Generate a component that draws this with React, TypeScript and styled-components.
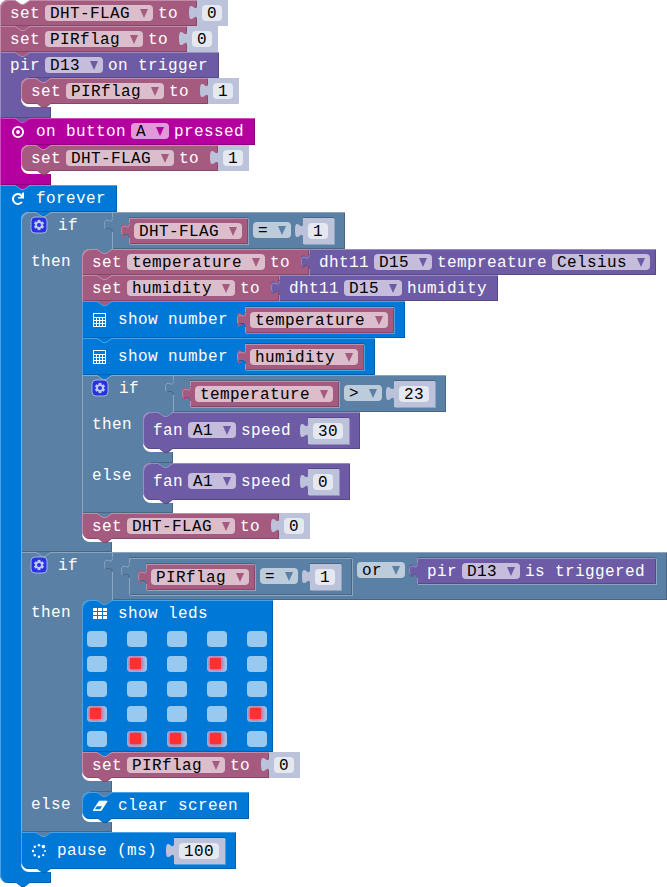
import React from "react";
import styled, { createGlobalStyle, css } from "styled-components";

/* ---------- palette ---------- */

type Tone = { base: string; light: string; dark: string; field: string };

const variable: Tone = { base: "#a55b80", light: "#c08ca6", dark: "#844966", field: "#dbbdcc" };
const sensor: Tone = { base: "#6d5ba5", light: "#998cc0", dark: "#574984", field: "#c5bddb" };
const input: Tone = { base: "#b4009e", light: "#cb4cbb", dark: "#90007e", field: "#e199d8" };
const basic: Tone = { base: "#0078d7", light: "#4ca1e3", dark: "#0060ac", field: "#99c9ef" };
const logic: Tone = { base: "#5b80a5", light: "#8ca6c0", dark: "#496684", field: "#bdccdb" };
const shadow: Tone = { base: "#bdc2db", light: "#bdc2db", dark: "#bdc2db", field: "#e5e7f1" };

const GlobalStyle = createGlobalStyle`
  html, body { margin: 0; background: #fff; }
  body {
    font-family: "Liberation Mono", monospace;
    font-size: 16px;
    letter-spacing: 0.398px;
    overflow: hidden;
  }
  * { box-sizing: border-box; }
`;

/* ---------- block surfaces ---------- */

const bevel = css<{ $tone: Tone }>`
  background: ${(p) => p.$tone.base};
  box-shadow: inset 1px 1px 0 ${(p) => p.$tone.light}, inset -1px -1px 0 ${(p) => p.$tone.dark};
`;

const Workspace = styled.main`
  width: 667px;
  height: 887px;
  overflow: hidden;
  background: #fff;
`;

const Stack = styled.div`
  display: flex;
  flex-direction: column;
  align-items: flex-start;
`;

const Line = styled.div`
  display: flex;
  align-items: flex-start;
`;

const Surface = styled.div<{ $tone: Tone; $h: number; $top?: boolean; $bottom?: boolean; $inline?: boolean }>`
  position: relative;
  display: flex;
  align-items: flex-start;
  gap: 5px;
  flex: none;
  height: ${(p) => p.$h}px;
  padding: ${(p) => (p.$inline ? 10 : 5)}px 11px 0 10px;
  border-radius: ${(p) => (p.$top ? "8px" : "0")} 0 0 ${(p) => (p.$bottom ? "8px" : "0")};
  ${bevel}
`;

const Text = styled.span<{ $after?: number }>`
  height: 16px;
  line-height: 18px;
  white-space: pre;
  color: #fff;
  margin-right: ${(p) => p.$after ?? 0}px;
`;

const IconBox = styled.span<{ $after?: number }>`
  width: 16px;
  height: 16px;
  margin-right: ${(p) => p.$after ?? 5}px;
  flex: none;
  svg { display: block; overflow: visible; }
`;

const Menu = styled.span<{ $tone: Tone }>`
  display: flex;
  height: 16px;
  padding: 0 5px;
  line-height: 18px;
  white-space: pre;
  color: #000;
  background: ${(p) => p.$tone.field};
  border-radius: 4px;
  svg { display: block; width: 8px; height: 16px; margin-left: 10px; }
`;

const Dropdown = ({ tone, children }: { tone: Tone; children: string }) => (
  <Menu $tone={tone}>
    {children}
    <svg viewBox="0 0 8 16"><path d="M0 4H8L4 13Z" fill={tone.base} /></svg>
  </Menu>
);

/* ---------- connectors ---------- */

const NotchSvg = styled.svg`
  position: absolute;
  left: 15px;
  top: 0;
  width: 16px;
  height: 6px;
  z-index: 1;
`;

const StudSvg = styled.svg`
  position: absolute;
  left: 15px;
  top: calc(100% - 1px);
  width: 16px;
  height: 6px;
  z-index: 3;
`;

const PlugSvg = styled.svg`
  position: absolute;
  left: -8px;
  top: 0;
  width: 9px;
  height: 22px;
`;

const Notch = ({ above, tone }: { above: string; tone: Tone }) => (
  <NotchSvg viewBox="0 0 16 6">
    <path d="M0 0L6 4H9L15 0Z" fill={above} />
    <path d="M0 0.5L6 4.5H9L15 0.5" fill="none" stroke={tone.light} />
  </NotchSvg>
);

const Stud = ({ tone }: { tone: Tone }) => (
  <StudSvg viewBox="0 0 16 6">
    <path d="M0 0L6.5 5H9.5L16 0Z" fill={tone.dark} />
    <path d="M0 0L6 4H9L15 0Z" fill={tone.base} />
  </StudSvg>
);

const plugPath = "M8 5c0 10-8-8-8 7.5s8-2.5 8 7.5";

const Plug = ({ tone, host }: { tone: Tone; host: Tone }) => (
  <PlugSvg viewBox="0 0 9 22">
    <path d={plugPath + "h1V5z"} fill={tone.base} />
    {tone !== shadow && (
      <>
        <path d="M8.5 6c-.3 5-3 2.5-5.5 2.2C1.2 8.2.5 9.5.5 12.5c0 3 .6 4 1.3 4.3" fill="none" stroke={tone.light} />
        <path d="M1.8 16.6c3.2.4 5.7-1.6 6.4 2.9" fill="none" stroke={host.dark} />
      </>
    )}
  </PlugSvg>
);

/* ---------- value blocks ---------- */

const ValueBox = styled.div<{ $tone: Tone; $host: Tone; $nested?: boolean; $wide?: boolean }>`
  position: relative;
  display: flex;
  align-items: flex-start;
  gap: 5px;
  flex: none;
  height: 26px;
  padding: 5px ${(p) => (p.$wide ? 11 : 6)}px 0 ${(p) => (p.$wide ? 10 : 5)}px;
  background: ${(p) => p.$tone.base};
  box-shadow:
    inset 1px 1px 0 ${(p) => p.$tone.light},
    inset -1px -1px 0 ${(p) => p.$tone.dark}
    ${(p) => p.$nested && css`, 1px 1px 0 ${p.$host.light}, 0 -1px 0 ${p.$host.dark}`};
  ${(p) => p.$nested && css`
    margin-top: -4px;
    margin-left: 12px;
  `}
`;

const Digits = styled.span`
  height: 16px;
  padding: 0 5px;
  line-height: 18px;
  color: #000;
  background: ${shadow.field};
  border-radius: 4px;
`;

type Hosted = { host: Tone; nested?: boolean };

const NumberValue = ({ value, host, nested }: Hosted & { value: string }) => (
  <ValueBox $tone={shadow} $host={host} $nested={nested}>
    <Plug tone={shadow} host={host} />
    <Digits>{value}</Digits>
  </ValueBox>
);

const VariableValue = ({ name, host }: { name: string; host: Tone }) => (
  <ValueBox $tone={variable} $host={host} $nested>
    <Plug tone={variable} host={host} />
    <Dropdown tone={variable}>{name}</Dropdown>
  </ValueBox>
);

const UnitSlot = styled.span`
  margin-right: -5px;
`;

const SensorValue = ({ label, pin, tail, unit, host, nested }: Hosted & { label: string; pin: string; tail: string; unit?: string }) => (
  <ValueBox $tone={sensor} $host={host} $nested={nested} $wide>
    <Plug tone={sensor} host={host} />
    <Text>{label}</Text>
    <Dropdown tone={sensor}>{pin}</Dropdown>
    <Text>{tail}</Text>
    {unit && <UnitSlot><Dropdown tone={sensor}>{unit}</Dropdown></UnitSlot>}
  </ValueBox>
);

const OperatorBox = styled.div<{ $h: number; $nested?: boolean }>`
  position: relative;
  display: flex;
  align-items: flex-start;
  gap: 5px;
  flex: none;
  height: ${(p) => p.$h}px;
  padding: 10px 11px 0 5px;
  background: ${logic.base};
  box-shadow:
    inset 1px 1px 0 ${logic.light},
    inset -1px -1px 0 ${logic.dark}
    ${(p) => p.$nested && css`, 1px 1px 0 ${logic.light}, 0 -1px 0 ${logic.dark}`};
  ${(p) => p.$nested && css`
    margin-top: -4px;
    margin-left: 12px;
  `}
`;

const ValueSlot = styled.div`
  display: flex;
  margin-left: -5px;
`;

const SlotPad = styled.i`
  width: 5px;
  margin-right: -5px;
`;

const Operator = ({ left, op, right, h = 37, nested }: { left: React.ReactNode; op: string; right: React.ReactNode; h?: number; nested?: boolean }) => (
  <OperatorBox $h={h} $nested={nested}>
    <Plug tone={logic} host={logic} />
    {left}
    <Dropdown tone={logic}>{op}</Dropdown>
    <ValueSlot>
      <SlotPad />
      {right}
    </ValueSlot>
  </OperatorBox>
);

/* ---------- icons ---------- */

const TargetIcon = () => (
  <IconBox>
    <svg width="16" height="16" viewBox="0 0 16 16">
      <circle cx="8" cy="9" r="5.1" fill="none" stroke="#fff" strokeWidth="1.9" />
      <circle cx="8" cy="9" r="1.9" fill="#fff" />
    </svg>
  </IconBox>
);

const RepeatIcon = () => (
  <IconBox>
    <svg width="16" height="16" viewBox="0 0 16 16">
      <path d="M11.9 12A5 5 0 1 1 11.9 5.9" fill="none" stroke="#fff" strokeWidth="2" />
      <path d="M14 2.6V8.6H8V7.4L12.8 2.6Z" fill="#fff" />
      <path d="M7.8 6.4L10.6 3.6L12.2 5.2L9.9 7.2Z" fill={basic.base} />
      <path d="M7 4.1A5 5 0 0 1 11.9 6.2" fill="none" stroke="#fff" strokeWidth="1.9" />
    </svg>
  </IconBox>
);

const CalculatorIcon = () => (
  <IconBox>
    <svg width="16" height="16" viewBox="0 0 16 16" shapeRendering="crispEdges">
      <rect x="1" y="2" width="13" height="14" fill="#fff" />
      <rect x="2" y="3" width="11" height="3" fill={basic.base} />
      {[7, 10, 13].map((y) =>
        [2, 5, 8, 11].map((x) => <rect key={`${x}-${y}`} x={x} y={y} width="2" height="2" fill={basic.base} />)
      )}
    </svg>
  </IconBox>
);

const GridIcon = () => (
  <IconBox>
    <svg width="16" height="16" viewBox="0 0 16 16" shapeRendering="crispEdges">
      {[3, 7, 11].map((y) => [1, 6, 11].map((x) => <rect key={`${x}-${y}`} x={x} y={y} width="4" height="3" fill="#fff" />))}
    </svg>
  </IconBox>
);

const EraserIcon = () => (
  <IconBox>
    <svg width="16" height="16" viewBox="0 0 16 16">
      <path d="M7.2 4.2H15.1L9.2 13.4H1.3Z" fill="#fff" stroke="#fff" strokeWidth="1" strokeLinejoin="round" />
      <path d="M4.9 9.3H10L8.1 12.3H3Z" fill={basic.base} />
    </svg>
  </IconBox>
);

const SpinnerIcon = () => (
  <IconBox>
    <svg width="16" height="16" viewBox="0 0 16 16" fill="#fff">
      <circle cx="8" cy="3.2" r="1.3" />
      <circle cx="12.4" cy="4.6" r="1.8" />
      <circle cx="14" cy="9" r="1" />
      <circle cx="12.2" cy="13.2" r="1.1" />
      <circle cx="8" cy="14.8" r="1.2" />
      <circle cx="3.8" cy="13.2" r="1.2" />
      <circle cx="2" cy="9" r="1.2" />
      <circle cx="3.8" cy="4.8" r="1.2" />
    </svg>
  </IconBox>
);

const GearIcon = () => (
  <IconBox $after={6}>
    <svg width="16" height="16" viewBox="0 0 16 16">
      <rect x="0" y="0" width="16" height="16" rx="4" fill="#2533e2" stroke="#a5b4dc" />
      <g fill="#c3cbf2">
        {[0, 60, 120].map((a) => (
          <rect key={a} x="6.6" y="2.9" width="2.8" height="10.2" transform={`rotate(${a} 8 8)`} />
        ))}
        <circle cx="8" cy="8" r="3.8" />
      </g>
      <circle cx="8" cy="8" r="2" fill="#2533e2" />
    </svg>
  </IconBox>
);

/* ---------- statement blocks ---------- */

type Place = { above: string; first?: boolean; last?: boolean };

const SetVariable = ({ name, above, first, last, children }: Place & { name: string; children: React.ReactNode }) => (
  <Line>
    <Surface $tone={variable} $h={26} $top={first} $bottom={last}>
      <Notch above={above} tone={variable} />
      <Text>set</Text>
      <Dropdown tone={variable}>{name}</Dropdown>
      <Text $after={8}>to</Text>
      {last && <Stud tone={variable} />}
    </Surface>
    {children}
  </Line>
);

const ShowNumber = ({ name, above }: Place & { name: string }) => (
  <Surface $tone={basic} $h={37} $inline>
    <Notch above={above} tone={basic} />
    <CalculatorIcon />
    <Text>show number</Text>
    <VariableValue name={name} host={basic} />
  </Surface>
);

const FanSpeed = ({ speed }: { speed: string }) => (
  <Surface $tone={sensor} $h={37} $inline $top $bottom>
    <Notch above={logic.base} tone={sensor} />
    <Text>fan</Text>
    <Dropdown tone={sensor}>A1</Dropdown>
    <Text>speed</Text>
    <NumberValue value={speed} host={sensor} nested />
    <Stud tone={sensor} />
  </Surface>
);

/* ---------- wrapping blocks ---------- */

const Body = styled.div<{ $tone: Tone; $spine: number }>`
  position: relative;
  display: flex;
  align-items: flex-start;
  margin-top: -1px;
  padding-top: 1px;
  background:
    linear-gradient(${(p) => p.$tone.light}, ${(p) => p.$tone.light}) 0 0 / 1px 100% no-repeat,
    linear-gradient(${(p) => p.$tone.base}, ${(p) => p.$tone.base}) 0 0 / ${(p) => p.$spine + 8}px 100% no-repeat;
`;

const Spine = styled.div<{ $w: number }>`
  width: ${(p) => p.$w}px;
  flex: none;
  padding: 4px 0 0 10px;
`;

const Mouth = styled.div`
  padding-bottom: 3px;
  background: #fff;
  border-radius: 8px 0 0 8px;
`;

const Foot = styled.div<{ $tone: Tone; $w: number; $h: number; $end?: boolean }>`
  position: relative;
  width: ${(p) => p.$w}px;
  height: ${(p) => p.$h}px;
  background: ${(p) => p.$tone.base};
  border-bottom-left-radius: ${(p) => (p.$end ? 8 : 0)}px;
  box-shadow: inset 1px 0 0 ${(p) => p.$tone.light}, inset -1px -1px 0 ${(p) => p.$tone.dark};
`;

const Wrap = ({ tone, spine = 21, foot = 11, label, end, children }: { tone: Tone; spine?: number; foot?: number; label?: string; end?: boolean; children: React.ReactNode }) => (
  <>
    <Body $tone={tone} $spine={spine}>
      <Spine $w={spine}>{label && <Text>{label}</Text>}</Spine>
      <Mouth><Stack>{children}</Stack></Mouth>
    </Body>
    <Foot $tone={tone} $w={spine + 30} $h={foot} $end={end}>{end && <Stud tone={tone} />}</Foot>
  </>
);

const IfHead = styled.div<{ $h: number; $top?: boolean }>`
  position: relative;
  display: flex;
  gap: 5px;
  width: 91px;
  height: ${(p) => p.$h}px;
  padding: 5px 0 0 10px;
  background: ${logic.base};
  border-top-left-radius: ${(p) => (p.$top ? 8 : 0)}px;
  box-shadow: inset 1px 1px 0 ${logic.light};
`;

const IfLine = ({ h, first, above, children }: { h: number; first?: boolean; above: string; children: React.ReactNode }) => (
  <Line>
    <IfHead $h={h} $top={first}>
      <Notch above={above} tone={logic} />
      <GearIcon />
      <Text>if</Text>
    </IfHead>
    {children}
  </Line>
);

/* ---------- led matrix ---------- */

const LedBlock = styled.div`
  position: relative;
  width: 191px;
  height: 152px;
  padding: 5px 5px 0;
  border-top-left-radius: 8px;
  background: ${basic.base};
  box-shadow: inset 1px 1px 0 ${basic.light}, inset -1px -1px 0 ${basic.dark};
`;

const LedHead = styled.div`
  display: flex;
  gap: 5px;
  height: 26px;
  padding-left: 5px;
`;

const LedGrid = styled.div`
  display: grid;
  grid-template-columns: repeat(5, 20px);
  gap: 9px 20px;
`;

const Led = styled.div<{ $on: boolean }>`
  height: 16px;
  border-radius: 4px;
  overflow: hidden;
  background: ${basic.field};
  padding: 2px 3px;
  &::before {
    content: "";
    display: ${(p) => (p.$on ? "block" : "none")};
    width: 11px;
    height: 11px;
    background: #ff3030;
    box-shadow: 0 0 5px 1px #e04060;
  }
`;

const pattern = [".....", ".#.#.", ".....", "#...#", ".###."];

const ShowLeds = () => (
  <LedBlock>
    <Notch above={logic.base} tone={basic} />
    <LedHead>
      <GridIcon />
      <Text>show leds</Text>
    </LedHead>
    <LedGrid>
      {pattern.flatMap((row, y) => [...row].map((c, x) => <Led key={`${x}-${y}`} $on={c === "#"} />))}
    </LedGrid>
  </LedBlock>
);

/* ---------- program ---------- */

const App = () => (
  <>
    <GlobalStyle />
    <Workspace>
      <Stack>
        <SetVariable name="DHT-FLAG" above="#fff" first>
          <NumberValue value="0" host={variable} />
        </SetVariable>
        <SetVariable name="PIRflag" above={variable.base}>
          <NumberValue value="0" host={variable} />
        </SetVariable>

        <Surface $tone={sensor} $h={26}>
          <Notch above={variable.base} tone={sensor} />
          <Text>pir</Text>
          <Dropdown tone={sensor}>D13</Dropdown>
          <Text>on trigger</Text>
        </Surface>
        <Wrap tone={sensor}>
          <SetVariable name="PIRflag" above={sensor.base} first last>
            <NumberValue value="1" host={variable} />
          </SetVariable>
        </Wrap>

        <Surface $tone={input} $h={27}>
          <Notch above={sensor.base} tone={input} />
          <TargetIcon />
          <Text>on button</Text>
          <Dropdown tone={input}>A</Dropdown>
          <Text>pressed</Text>
        </Surface>
        <Wrap tone={input}>
          <SetVariable name="DHT-FLAG" above={input.base} first last>
            <NumberValue value="1" host={variable} />
          </SetVariable>
        </Wrap>

        <Surface $tone={basic} $h={27}>
          <Notch above={input.base} tone={basic} />
          <RepeatIcon />
          <Text>forever</Text>
        </Surface>
        <Wrap tone={basic} end>
          <IfLine h={37} first above={basic.base}>
            <Operator left={<VariableValue name="DHT-FLAG" host={logic} />} op="=" right={<NumberValue value="1" host={logic} nested />} />
          </IfLine>
          <Wrap tone={logic} spine={61} foot={10} label="then">
            <SetVariable name="temperature" above={logic.base} first>
              <SensorValue label="dht11" pin="D15" tail="tempreature" unit="Celsius" host={variable} />
            </SetVariable>
            <SetVariable name="humidity" above={variable.base}>
              <SensorValue label="dht11" pin="D15" tail="humidity" host={variable} />
            </SetVariable>
            <ShowNumber name="temperature" above={variable.base} />
            <ShowNumber name="humidity" above={basic.base} />
            <IfLine h={37} above={basic.base}>
              <Operator left={<VariableValue name="temperature" host={logic} />} op="&gt;" right={<NumberValue value="23" host={logic} nested />} />
            </IfLine>
            <Wrap tone={logic} spine={61} label="then">
              <FanSpeed speed="30" />
            </Wrap>
            <Wrap tone={logic} spine={61} foot={10} label="else">
              <FanSpeed speed="0" />
            </Wrap>
            <SetVariable name="DHT-FLAG" above={logic.base} last>
              <NumberValue value="0" host={variable} />
            </SetVariable>
          </Wrap>

          <IfLine h={48} above={logic.base}>
            <Operator
              h={48}
              left={
                <Operator nested left={<VariableValue name="PIRflag" host={logic} />} op="=" right={<NumberValue value="1" host={logic} nested />} />
              }
              op="or"
              right={<SensorValue label="pir" pin="D13" tail="is triggered" host={logic} nested />}
            />
          </IfLine>
          <Wrap tone={logic} spine={61} label="then">
            <ShowLeds />
            <SetVariable name="PIRflag" above={basic.base} last>
              <NumberValue value="0" host={variable} />
            </SetVariable>
          </Wrap>
          <Wrap tone={logic} spine={61} foot={10} label="else">
            <Surface $tone={basic} $h={27} $top $bottom>
              <Notch above={logic.base} tone={basic} />
              <EraserIcon />
              <Text>clear screen</Text>
              <Stud tone={basic} />
            </Surface>
          </Wrap>

          <Surface $tone={basic} $h={37} $inline $bottom>
            <Notch above={logic.base} tone={basic} />
            <SpinnerIcon />
            <Text>pause (ms)</Text>
            <NumberValue value="100" host={basic} nested />
            <Stud tone={basic} />
          </Surface>
        </Wrap>
      </Stack>
    </Workspace>
  </>
);

export default App;
